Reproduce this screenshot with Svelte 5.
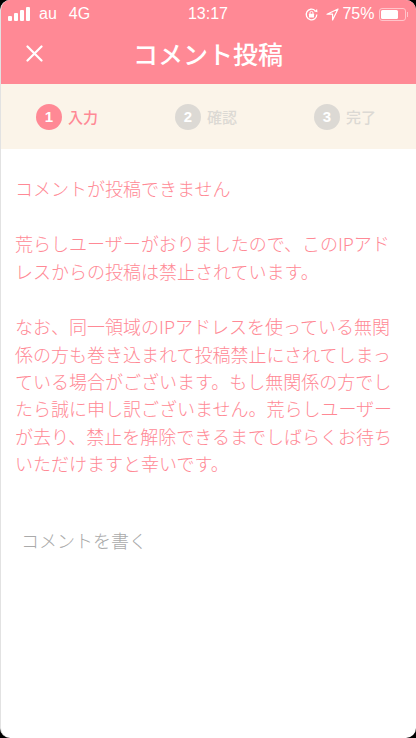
<script>
  const steps = [
    { n: 1, label: "入力", on: true },
    { n: 2, label: "確認", on: false },
    { n: 3, label: "完了", on: false }
  ];
  const paragraphs = [
    ["コメントが投稿できません"],
    ["荒らしユーザーがおりましたので、このIPアド", "レスからの投稿は禁止されています。"],
    [
      "なお、同一領域のIPアドレスを使っている無関",
      "係の方も巻き込まれて投稿禁止にされてしまっ",
      "ている場合がございます。もし無関係の方でし",
      "たら誠に申し訳ございません。荒らしユーザー",
      "が去り、禁止を解除できるまでしばらくお待ち",
      "いただけますと幸いです。"
    ]
  ];
</script>

<div class="phone">
  <header class="top">
    <div class="status">
      <div class="left">
        <span class="bars"><i></i><i></i><i></i><i></i></span>
        <span class="au">au</span>
        <span class="net">4G</span>
      </div>
      <div class="time">13:17</div>
      <div class="right">
        <svg width="15" height="15" viewBox="0 0 15 15" fill="none" stroke="#fff">
          <path d="M12.8 7.5a5.3 5.3 0 1 1-1.6-3.8" stroke-width="1.3" />
          <path d="M10.2 4.6l3.3.6-.4-3.2z" fill="#fff" stroke="none" />
          <rect x="5" y="6.8" width="5" height="3.6" rx=".5" fill="#fff" stroke="none" />
          <path d="M6 7V5.9a1.5 1.5 0 0 1 3 0V7" stroke-width="1" />
        </svg>
        <svg class="loc" width="13" height="13" viewBox="0 0 13 13" fill="none" stroke="#fff" stroke-width="1.2">
          <path d="M12 1L1 6.2h5.6V12z" stroke-linejoin="round" />
        </svg>
        <span class="pct">75%</span>
        <span class="batt"><b></b></span><span class="nub"></span>
      </div>
    </div>
    <div class="title">
      <button class="close" aria-label="閉じる">
        <svg width="17" height="17" viewBox="0 0 17 17" stroke="#fff" stroke-width="2.2" stroke-linecap="round">
          <path d="M1.5 1.5l14 14M15.5 1.5l-14 14" />
        </svg>
      </button>
      <h1>コメント投稿</h1>
    </div>
  </header>

  <nav class="steps">
    {#each steps as s}
      <div class="step" class:on={s.on}>
        <span class="num">{s.n}</span>
        <span class="lab">{s.label}</span>
      </div>
    {/each}
  </nav>

  <main class="body">
    {#each paragraphs as p}
      <p>
        {#each p as line}
          <span class="line">{line}</span>
        {/each}
      </p>
    {/each}
    <div class="write">コメントを書く</div>
  </main>
</div>

<style>
:global(body) {
  margin: 0;
  background: #000;
}
.phone {
  width: 416px;
  height: 738px;
  overflow: hidden;
  background: #fff;
  border-radius: 10px;
  box-sizing: border-box;
  border-left: 1px solid #e2e2e2;
  font-family: "Noto Sans CJK JP", "Noto Sans", sans-serif;
  display: flex;
  flex-direction: column;
}
.top {
  background: #ff8995;
  height: 84px;
  margin-left: -1px;
  color: #fff;
}
.status {
  height: 28px;
  display: grid;
  grid-template-columns: 1fr auto 1fr;
  align-items: center;
  font-family: "Liberation Sans", sans-serif;
  font-size: 16px;
  padding: 0 8px 0 8px;
}
.left, .right {
  display: flex;
  align-items: center;
}
.left { gap: 9px; }
.net { margin-left: 3px; }
.right { justify-content: flex-end; }
.bars {
  display: flex;
  align-items: flex-end;
  gap: 2px;
  height: 14px;
}
.bars i {
  width: 4px;
  background: #fff;
  border-radius: 1px;
}
.bars i:nth-child(1) { height: 5px; }
.bars i:nth-child(2) { height: 8px; }
.bars i:nth-child(3) { height: 11px; }
.bars i:nth-child(4) { height: 14px; }
.time {
  font-weight: 500;
}
.loc { margin-left: 7px; }
.pct { margin-left: 3px; }
.batt {
  margin-left: 4px;
  width: 27px;
  height: 13px;
  border: 1px solid #ffc4ca;
  border-radius: 3px;
  padding: 1px;
  box-sizing: border-box;
  display: block;
}
.batt b {
  display: block;
  width: 75%;
  height: 100%;
  background: #fff;
  border-radius: 1.5px;
}
.nub {
  width: 1.5px;
  height: 5px;
  margin-left: 1px;
  background: #ffc4ca;
}
.title {
  position: relative;
  height: 50px;
  display: flex;
  align-items: center;
  justify-content: center;
}
.title h1 {
  margin: 0;
  font-size: 25px;
  font-weight: 500;
  line-height: 50px;
  color: #fff;
}
.close {
  position: absolute;
  left: 26px;
  top: 17px;
  padding: 0;
  border: 0;
  background: none;
  display: flex;
}
.steps {
  height: 65px;
  background: #fbf4e9;
  display: grid;
  grid-template-columns: 139px 139px 1fr;
  align-items: center;
  padding-left: 35px;
  flex: none;
}
.step {
  display: flex;
  align-items: center;
  gap: 6px;
  color: #dcd9d4;
  font-size: 15px;
  font-weight: 500;
}
.step.on { color: #ff8995; }
.num {
  width: 26px;
  height: 26px;
  border-radius: 50%;
  background: #dcd9d4;
  color: #fff;
  font-family: "Liberation Sans", sans-serif;
  font-weight: 700;
  font-size: 15px;
  display: flex;
  align-items: center;
  justify-content: center;
}
.on .num { background: #ff8995; }
.body {
  padding: 26px 15px 0 14px;
  color: #ff8995;
  font-size: 18px;
  font-weight: 300;
  line-height: 27.4px;
  flex: 1;
}
.body p {
  margin: 0 0 28px;
}
.line {
  display: block;
  white-space: nowrap;
}
.write {
  margin: 49px 0 0 6px;
  color: #aaa;
  font-size: 18px;
}
</style>
